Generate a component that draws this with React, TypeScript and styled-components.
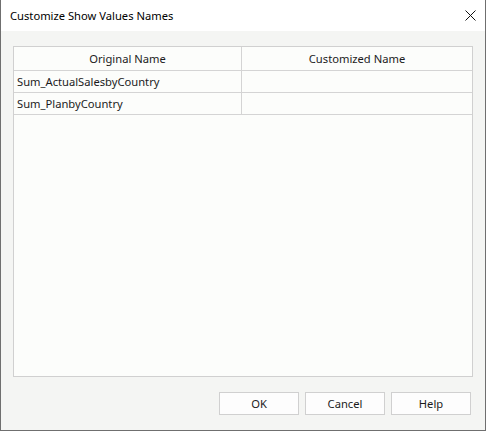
import { Fragment } from "react";
import styled, { createGlobalStyle } from "styled-components";

const rows = [
  { id: 1, original: "Sum_ActualSalesbyCountry", customized: "" },
  { id: 2, original: "Sum_PlanbyCountry", customized: "" },
];

const buttons = ["OK", "Cancel", "Help"];

const GlobalStyle = createGlobalStyle`
  html, body {
    margin: 0;
    padding: 0;
    background: #ffffff;
  }
  * {
    box-sizing: border-box;
  }
`;

const Window = styled.div`
  width: 486px;
  height: 431px;
  display: flex;
  flex-direction: column;
  border: 1px solid #6f6f6f;
  border-top: none;
  background: #f4f5f3;
  font-family: "Noto Sans", "Liberation Sans", sans-serif;
  font-size: 11.2px;
  color: #1b1b1b;
`;

const TitleBar = styled.div`
  height: 31px;
  flex: none;
  display: flex;
  align-items: center;
  justify-content: space-between;
  padding: 0 9px 1px 9px;
  background: #ffffff;
`;

const Title = styled.span`
  font-size: 11.2px;
  color: #000000;
`;

const CloseButton = styled.button`
  width: 12px;
  height: 12px;
  padding: 0;
  border: none;
  background: transparent;
  display: flex;
  align-items: center;
  justify-content: center;
  cursor: pointer;
`;

const Body = styled.div`
  flex: 1;
  display: flex;
  flex-direction: column;
  gap: 15px;
  padding: 15px 12px 15px 12px;
`;

const Panel = styled.div`
  flex: 1;
  border: 1px solid #d0d0d0;
  background: #fcfdfb;
`;

const Grid = styled.div`
  display: grid;
  grid-template-columns: 228px 1fr;
`;

const Cell = styled.div<{ $header?: boolean; $last?: boolean }>`
  height: ${(p) => (p.$header ? "24px" : "22px")};
  display: flex;
  align-items: center;
  justify-content: ${(p) => (p.$header ? "center" : "flex-start")};
  padding: 0 3px 1px 3px;
  border-bottom: 1px solid #d4d4d4;
  border-right: ${(p) => (p.$last ? "none" : "1px solid #d4d4d4")};
  white-space: nowrap;
  overflow: hidden;
`;

const ButtonRow = styled.div`
  flex: none;
  display: flex;
  justify-content: flex-end;
  gap: 6px;
  padding-right: 2px;
`;

const DialogButton = styled.button`
  width: 80px;
  height: 23px;
  border: 1px solid #d0d0d0;
  background: #fdfdfd;
  font-family: inherit;
  font-size: 11.2px;
  color: #1b1b1b;
  padding: 0 0 1px 0;
`;

export default function App() {
  return (
    <>
      <GlobalStyle />
      <Window>
        <TitleBar>
          <Title>Customize Show Values Names</Title>
          <CloseButton aria-label="Close">
            <svg width="11" height="11" viewBox="0 0 11 11">
              <path d="M0.5 0.5 L10.5 10.5 M10.5 0.5 L0.5 10.5" stroke="#111" strokeWidth="1" fill="none" />
            </svg>
          </CloseButton>
        </TitleBar>
        <Body>
          <Panel>
            <Grid>
              <Cell $header>Original Name</Cell>
              <Cell $header $last>Customized Name</Cell>
              {rows.map((r) => (
                <Fragment key={r.id}>
                  <Cell>{r.original}</Cell>
                  <Cell $last>{r.customized}</Cell>
                </Fragment>
              ))}
            </Grid>
          </Panel>
          <ButtonRow>
            {buttons.map((b) => (
              <DialogButton key={b}>{b}</DialogButton>
            ))}
          </ButtonRow>
        </Body>
      </Window>
    </>
  );
}
